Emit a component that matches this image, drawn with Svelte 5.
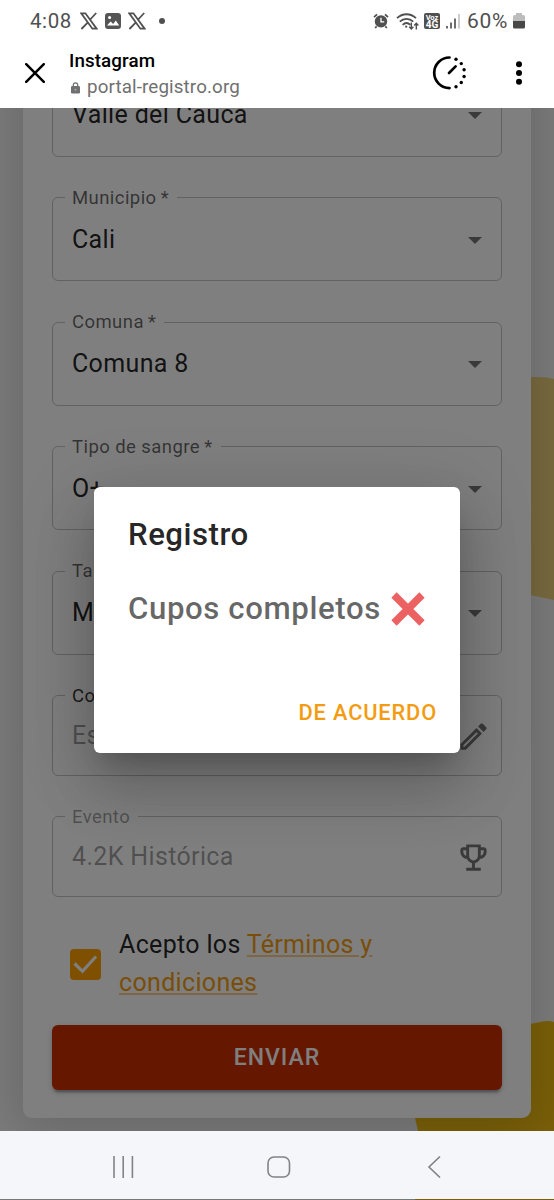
<script lang="ts">
    type Field = {
        label: string
        value: string
        icon: "arrow" | "pencil" | "trophy"
        required?: boolean
        placeholder?: boolean
        disabled?: boolean
    }

    const fields: Field[] = [
        {label: "Departamento", value: "Valle del Cauca", icon: "arrow", required: true},
        {label: "Municipio", value: "Cali", icon: "arrow", required: true},
        {label: "Comuna", value: "Comuna 8", icon: "arrow", required: true},
        {label: "Tipo de sangre", value: "O+", icon: "arrow", required: true},
        {label: "Talla", value: "M", icon: "arrow", required: true},
        {label: "Comentario", value: "Escribe", icon: "pencil", placeholder: true},
        {label: "Evento", value: "4.2K Histórica", icon: "trophy", disabled: true}
    ]

    let accepted: boolean = $state(true)
    let open: boolean = $state(true)
</script>

{#snippet xLogo()}
    <svg class="x-logo" viewBox="0 0 18 18" width="18" height="18">
        <path d="M1.2 1.3h4.2l11.2 15.4h-4.2zM16.2 1l-6.5 7M7.9 10.3L1.4 17" />
    </svg>
{/snippet}

<div class="screen">
    <div class="status">
        <div class="status-left">
            <span class="clock">4:08</span>
            {@render xLogo()}
            <svg class="gallery" viewBox="0 0 16 16" width="16" height="16">
                <rect x="0" y="0" width="16" height="16" rx="3" fill="#555" />
                <path d="M2 12.5l3.6-4 2.6 2.6 2.6-3.6 3.4 5z" fill="#fff" />
                <circle cx="4.6" cy="4.6" r="1.5" fill="#fff" />
            </svg>
            {@render xLogo()}
            <span class="dot"></span>
        </div>
        <div class="status-right">
            <svg viewBox="0 0 16 16" width="16" height="16">
                <circle cx="8" cy="8.4" r="6.2" fill="#505050" />
                <path d="M1 4.2L4 1.4M15 4.2L12 1.4M3.6 13.4L2.2 15M12.4 13.4l1.4 1.6" stroke="#505050" stroke-width="1.8" />
                <path d="M8 4.8v4h3.2" fill="none" stroke="#fff" stroke-width="1.3" />
            </svg>
            <svg class="wifi" viewBox="0 0 24 17" width="24" height="17">
                <g fill="none" stroke="#505050" stroke-width="1.8">
                    <path d="M1 5.2C6.4-.1 14.6-.1 20 5.2" />
                    <path d="M3.8 8.6C7.6 4.9 13.4 4.9 17.2 8.6" />
                    <path d="M6.6 11.8C9 9.6 12 9.6 14.4 11.8" />
                    <path d="M15.3 9.5v6.3M13.2 13.8l2.1 2.2 2.1-2.2M20.3 16.5v-6M18.2 12.4l2.1-2.2 2.1 2.2" stroke-width="1.4" />
                </g>
                <circle cx="10.2" cy="13.7" r="1.1" fill="#505050" />
            </svg>
            <span class="volte"><b>Voz</b><b class="big">4G</b></span>
            <svg class="signal" viewBox="0 0 14 15" width="14" height="15">
                <path d="M1 12v2.5M5 8.5v6M9 4.5v10" stroke="#555" stroke-width="1.7" />
                <path d="M13 0v14.5" stroke="#c4c4c4" stroke-width="1.7" />
            </svg>
            <span class="percent">60%</span>
            <svg class="battery" viewBox="0 0 12 16" width="12" height="16">
                <path d="M3 0h6v2h1.5q1.5 0 1.5 1.5V8H0V3.5Q0 2 1.5 2H3z" fill="#bdbdbd" />
                <path d="M0 8h12v6q0 1.5-1.5 1.5h-9Q0 15.5 0 14z" fill="#484848" />
            </svg>
        </div>
    </div>

    <header class="browser">
        <svg viewBox="0 0 20 20" width="20" height="20">
            <path d="M1.2 1.2l17.6 17.6M18.8 1.2L1.2 18.8" stroke="#000" stroke-width="2.5" stroke-linecap="round" />
        </svg>
        <div class="site">
            <div class="app-name">Instagram</div>
            <div class="url">
                <svg viewBox="0 0 9 12" width="9" height="12">
                    <rect x="0" y="4" width="9" height="7.5" rx="1.2" fill="#707070" />
                    <path d="M2.3 4.5V3a2.2 2.2 0 0 1 4.4 0v1.5" fill="none" stroke="#707070" stroke-width="1.2" />
                    <circle cx="4.5" cy="7.7" r="1" fill="#aaa" />
                </svg>
                <span>portal-registro.org</span>
            </div>
        </div>
        <svg class="timer" viewBox="0 0 34 34" width="34" height="34">
            <path d="M17.5 1.5a15.3 15.3 0 0 0 0 30.6M17 17l6.6-6.6" fill="none" stroke="#000" stroke-width="2.7" stroke-linecap="round" />
            <circle cx="24" cy="3.3" r="1.7" />
            <circle cx="29.3" cy="7.6" r="1.7" />
            <circle cx="32.1" cy="13.7" r="1.7" />
            <circle cx="32.1" cy="20.5" r="1.7" />
            <circle cx="29.3" cy="26.5" r="1.7" />
            <circle cx="24" cy="30.8" r="1.7" />
        </svg>
        <svg class="more" viewBox="0 0 6 24" width="6" height="24">
            <circle cx="3" cy="3.3" r="3" />
            <circle cx="3" cy="12" r="3" />
            <circle cx="3" cy="20.7" r="3" />
        </svg>
    </header>

    <main class="page">
        <svg class="shapes" viewBox="0 0 554 1023" width="554" height="1023">
            <path d="M500 269H537Q548 269 554 271V492L520 485Z" fill="#f2d47e" />
            <path d="M415 1010L418 1023H554V914Q548 912 540 914L500 922V990Z" fill="#f6c012" />
        </svg>

        <form class="card" onsubmit={(e) => e.preventDefault()}>
            {#each fields as field}
                <fieldset class:input={field.icon !== "arrow"} class:disabled={field.disabled}>
                    <legend class:dark={field.placeholder}>{field.label}{field.required ? "\u2009*" : ""}</legend>
                    <div class="control">
                        <span class="value" class:muted={field.placeholder || field.disabled}>{field.value}</span>
                        {#if field.icon === "arrow"}
                            <svg class="arrow" viewBox="0 0 14 7" width="14" height="7">
                                <path d="M0 0h14L7 7z" />
                            </svg>
                        {:else if field.icon === "pencil"}
                            <svg class="adornment" viewBox="0 0 24 24" width="35" height="35">
                                <path d="m14.06 9.02.92.92L5.92 19H5v-.92l9.06-9.06M17.66 3c-.25 0-.51.1-.7.29l-1.83 1.83 3.75 3.75 1.83-1.83c.39-.39.39-1.02 0-1.41l-2.34-2.34c-.2-.2-.45-.29-.71-.29zm-3.6 3.19L3 17.25V21h3.75L17.81 9.94l-3.75-3.75z" />
                            </svg>
                        {:else}
                            <svg class="adornment" viewBox="0 0 24 24" width="35" height="35">
                                <path d="M19 5h-2V3H7v2H5c-1.1 0-2 .9-2 2v1c0 2.55 1.92 4.63 4.39 4.94.63 1.5 1.98 2.63 3.61 2.96V19H7v2h10v-2h-4v-3.1c1.63-.33 2.98-1.46 3.61-2.96C19.08 12.63 21 10.55 21 8V7c0-1.1-.9-2-2-2zM5 8V7h2v3.82C5.84 10.4 5 9.3 5 8zm7 6c-1.65 0-3-1.35-3-3V5h6v6c0 1.65-1.35 3-3 3zm7-6c0 1.3-.84 2.4-2 2.82V7h2v1z" />
                            </svg>
                        {/if}
                    </div>
                </fieldset>
            {/each}

            <div class="terms">
                <button type="button" class="checkbox" aria-label="Acepto" onclick={() => (accepted = !accepted)}>
                    {#if accepted}
                        <svg viewBox="0 0 31 31" width="31" height="31">
                            <path d="M4.5 14.5l8 7.8L26 7.5" fill="none" stroke="#fff" stroke-width="3.2" />
                        </svg>
                    {/if}
                </button>
                <p>Acepto los <a href="#terminos">Términos y condiciones</a></p>
            </div>

            <button class="submit">ENVIAR</button>
        </form>

        {#if open}
            <div class="backdrop">
                <div class="dialog" role="dialog">
                    <h2>Registro</h2>
                    <p class="message">
                        <span>Cupos completos</span>
                        <svg viewBox="0 0 34 34" width="34" height="34">
                            <path d="M3 3l28 28M31 3L3 31" stroke="#ec6262" stroke-width="7.5" />
                        </svg>
                    </p>
                    <button class="ok" onclick={() => (open = false)}>DE ACUERDO</button>
                </div>
            </div>
        {/if}
    </main>

    <nav>
        <svg viewBox="0 0 22 22" width="22" height="22">
            <path d="M2 0v22M11.2 0v22M20.4 0v22" />
        </svg>
        <svg class="home" viewBox="0 0 24 22" width="24" height="22">
            <rect x="1" y="1" width="21.5" height="20" rx="6" />
        </svg>
        <svg viewBox="0 0 14 22" width="14" height="22">
            <path d="M13 .5L2 11l11 10.5" />
        </svg>
    </nav>
    <div class="edge"></div>
</div>

<style>
    :global(body) {
        background: #fff;
    }

    .screen {
        width: 554px;
        height: 1200px;
        display: flex;
        flex-direction: column;
        overflow: hidden;
        font-family: Roboto, "Liberation Sans", sans-serif;
    }

    button {
        font-family: inherit;
        border: 0;
        padding: 0;
    }

    svg {
        display: block;
        flex: none;
    }

    .status {
        height: 42px;
        flex: none;
        display: flex;
        justify-content: space-between;
        padding: 0 29px 0 30px;
        color: #505050;
        font-size: 20.5px;
    }

    .status-left,
    .status-right {
        display: flex;
        align-items: center;
    }

    .status-left {
        gap: 8px;
    }

    .clock {
        width: 42px;
        letter-spacing: 0.6px;
    }

    .x-logo path {
        fill: none;
        stroke: #505050;
        stroke-width: 1.8;
    }

    .gallery {
        margin: 0 -1px;
    }

    .dot {
        width: 6px;
        height: 6px;
        margin-left: 5px;
        border-radius: 50%;
        background: #505050;
    }

    .wifi {
        margin-left: 7px;
    }

    .volte {
        width: 16px;
        height: 16px;
        margin-left: 4px;
        border-radius: 2px;
        background: #505050;
        color: #fff;
        display: flex;
        flex-direction: column;
        align-items: center;
        justify-content: center;
        overflow: hidden;
        font-size: 7.5px;
        line-height: 7px;
    }

    .volte .big {
        font-size: 10px;
        line-height: 8px;
    }

    .signal {
        margin-left: 6px;
    }

    .percent {
        width: 43px;
        margin-left: 7px;
        font-size: 21px;
        letter-spacing: 0.7px;
    }

    .battery {
        margin-left: 3px;
    }

    .browser {
        height: 66px;
        flex: none;
        display: flex;
        align-items: center;
        padding: 0 32px 4px 25px;
        box-sizing: border-box;
    }

    .site {
        flex: 1;
        margin-left: 24px;
        padding-top: 4px;
    }

    .app-name {
        font-size: 18.8px;
        font-weight: 500;
        line-height: 24px;
        letter-spacing: 0.1px;
        color: #000;
    }

    .url {
        display: flex;
        align-items: center;
        gap: 7px;
        margin: 1px 0 0 2px;
        font-size: 18.8px;
        line-height: 27px;
        letter-spacing: 0.12px;
        color: #707070;
    }

    .timer {
        margin-right: 1px;
    }

    .more {
        margin-left: 49px;
    }

    .page {
        position: relative;
        flex: 1;
        overflow: hidden;
        background: #f8f8f8;
    }

    .shapes {
        position: absolute;
        top: 0;
        left: 0;
    }

    .card {
        position: relative;
        width: 508px;
        height: 1127px;
        box-sizing: border-box;
        margin: -117px 0 0 23px;
        padding: 71px 29px 0;
        background: #fff;
        border-radius: 0 0 9px 9px;
        box-shadow: 0 8px 50px 8px rgba(0, 0, 0, 0.16);
    }

    fieldset {
        height: 94.6px;
        box-sizing: border-box;
        margin: 0 0 30px;
        padding: 0;
        min-width: 0;
        border: 1px solid rgba(0, 0, 0, 0.23);
        border-radius: 6px;
    }

    fieldset.input {
        height: 91px;
    }

    legend {
        height: 22px;
        margin-left: 12px;
        padding: 0 8px 0 7px;
        font-size: 18.5px;
        line-height: 22px;
        letter-spacing: 0.43px;
        color: rgba(0, 0, 0, 0.6);
    }

    legend.dark {
        color: rgba(0, 0, 0, 0.8);
    }

    .disabled legend {
        color: rgba(0, 0, 0, 0.38);
    }

    .control {
        height: 59px;
        display: flex;
        align-items: center;
        justify-content: space-between;
        padding: 0 10px 0 19px;
        fill: rgba(0, 0, 0, 0.54);
    }

    .input .control {
        height: 57px;
    }

    .value {
        padding-top: 2px;
        font-size: 25px;
        letter-spacing: 0.35px;
        color: rgba(0, 0, 0, 0.87);
    }

    .input .value {
        padding-top: 0;
    }

    .value.muted {
        color: rgba(0, 0, 0, 0.38);
    }

    .arrow {
        margin: 4px 9px 0 0;
    }

    .adornment {
        margin-top: 2px;
    }

    .terms {
        display: flex;
        align-items: center;
        gap: 18px;
        margin-top: -1px;
        padding-left: 18px;
    }

    .checkbox {
        width: 31px;
        height: 31px;
        margin-top: 2px;
        border-radius: 4px;
        background: #ffa000;
    }

    .terms p {
        width: 290px;
        margin: 0;
        font-size: 25px;
        line-height: 38px;
        letter-spacing: 0.33px;
        color: rgba(0, 0, 0, 0.87);
    }

    .terms a {
        color: #f39c12;
        text-decoration-color: rgba(243, 156, 18, 0.5);
    }

    .submit {
        width: 450px;
        height: 65px;
        margin-top: 23px;
        border-radius: 6px;
        background: #cc2e00;
        color: #fff;
        font-size: 23px;
        font-weight: 500;
        letter-spacing: 1px;
        box-shadow: 0 5px 2px -3px rgba(0, 0, 0, 0.2), 0 3px 3px rgba(0, 0, 0, 0.14), 0 2px 8px rgba(0, 0, 0, 0.12);
    }

    .backdrop {
        position: absolute;
        inset: 0;
        display: flex;
        align-items: center;
        justify-content: center;
        padding-top: 1px;
        background: rgba(0, 0, 0, 0.5);
    }

    .dialog {
        width: 366px;
        height: 266px;
        box-sizing: border-box;
        padding: 24px 23px 0 34px;
        display: flex;
        flex-direction: column;
        background: #fff;
        border-radius: 6px;
        box-shadow: 0 17px 23px -11px rgba(0, 0, 0, 0.2), 0 37px 58px 5px rgba(0, 0, 0, 0.14), 0 14px 71px 12px rgba(0, 0, 0, 0.12);
    }

    h2 {
        margin: 0;
        font-size: 31.2px;
        font-weight: 500;
        line-height: 48px;
        letter-spacing: 0.5px;
        color: rgba(0, 0, 0, 0.87);
    }

    .message {
        display: flex;
        align-items: center;
        gap: 10px;
        margin: 26px 0 0;
        font-size: 31.2px;
        font-weight: 500;
        line-height: 48px;
        letter-spacing: 0.6px;
        color: rgba(0, 0, 0, 0.6);
    }

    .ok {
        align-self: flex-end;
        margin-top: 64px;
        background: none;
        color: #f39c12;
        font-size: 21.8px;
        font-weight: 500;
        line-height: 32px;
        letter-spacing: 0.85px;
    }

    nav {
        height: 68px;
        flex: none;
        display: flex;
        align-items: center;
        justify-content: space-between;
        padding: 4px 113px 0 112px;
        box-sizing: border-box;
        background: #f5f6f9;
        fill: none;
        stroke: #838387;
        stroke-width: 1.6;
    }

    .home {
        margin-right: 4px;
    }

    .edge {
        height: 1px;
        flex: none;
        background: linear-gradient(90deg, #777 415px, #7b6009 415px);
    }
</style>
